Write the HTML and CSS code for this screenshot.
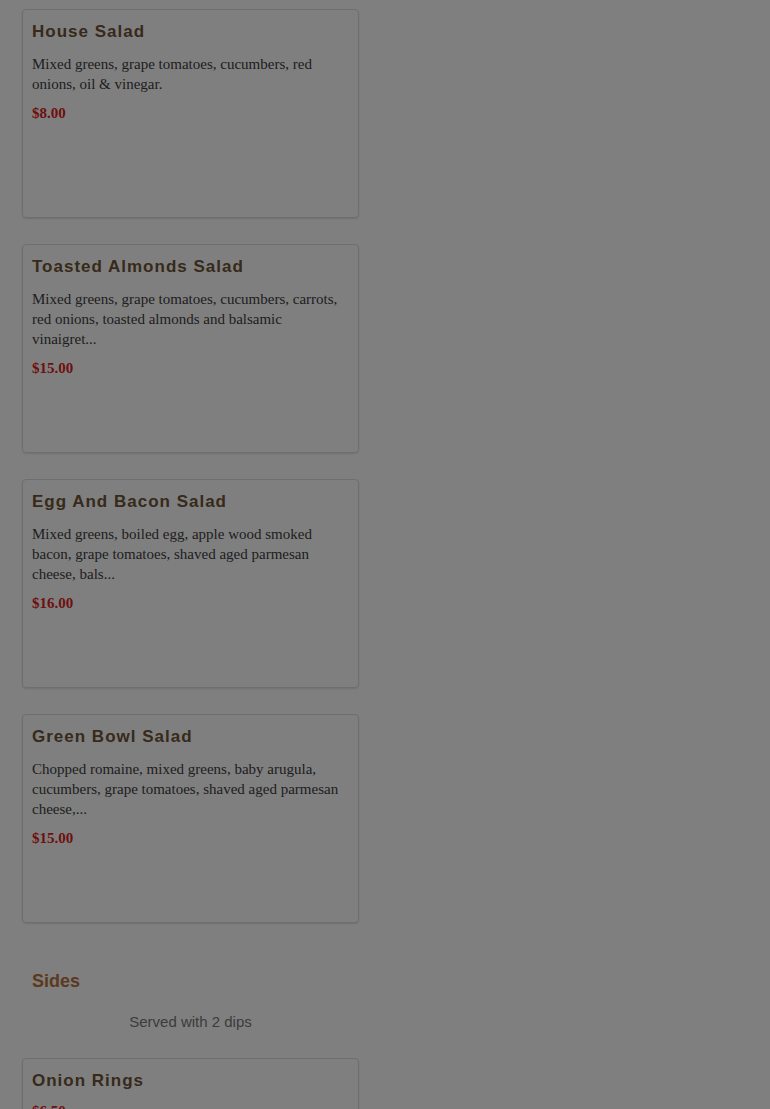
FILE: index.html
```html
<!DOCTYPE html>
<html lang="en">
<head>
  <meta charset="UTF-8">
  <meta name="viewport" content="width=device-width, initial-scale=1.0">
  <title>Menu</title>
  <link rel="stylesheet" href="styles.css">
</head>
<body>
  <div id="menu">
    <div class="item">
      <h3 class="itemName">House Salad</h3>
      <p class="itemDesc">Mixed greens, grape tomatoes, cucumbers, red onions, oil &amp; vinegar.</p>
      <p class="itemPrice">$8.00</p>
    </div>
    <div class="item">
      <h3 class="itemName">Toasted Almonds Salad</h3>
      <p class="itemDesc">Mixed greens, grape tomatoes, cucumbers, carrots, red onions, toasted almonds and balsamic vinaigret...</p>
      <p class="itemPrice">$15.00</p>
    </div>
    <div class="item">
      <h3 class="itemName">Egg And Bacon Salad</h3>
      <p class="itemDesc">Mixed greens, boiled egg, apple wood smoked bacon, grape tomatoes, shaved aged parmesan cheese, bals...</p>
      <p class="itemPrice">$16.00</p>
    </div>
    <div class="item">
      <h3 class="itemName">Green Bowl Salad</h3>
      <p class="itemDesc">Chopped romaine, mixed greens, baby arugula, cucumbers, grape tomatoes, shaved aged parmesan cheese,...</p>
      <p class="itemPrice">$15.00</p>
    </div>

    <h2 class="category">Sides</h2>
    <p class="categoryNote">Served with 2 dips</p>

    <div class="item">
      <h3 class="itemName">Onion Rings</h3>
      <p class="itemPrice">$6.50</p>
    </div>
  </div>
  <div id="backdrop"></div>
</body>
</html>
```

FILE: styles.css
```css
/* General Styling */
body {
  margin: 0;
  background-color: #fff;
  font-family: "Liberation Serif", "Times New Roman", serif;
  color: #404040;
}

#menu {
  width: 337px;
  margin-left: 22px;
  padding-top: 9px;
}

/* Menu items */
.item {
  box-sizing: border-box;
  height: 209px;
  margin-bottom: 26px;
  padding: 11px 9px 10px;
  border: 1px solid #dcdcdc;
  border-radius: 4px;
  box-shadow: 0 1px 2px rgba(0, 0, 0, 0.12);
}

.itemName {
  margin: 0;
  font-family: "Liberation Sans", Arial, sans-serif;
  font-size: 17px;
  line-height: 22px;
  letter-spacing: 1px;
  color: #6e5436;
}

.itemDesc {
  margin: 11px 0 0;
  font-size: 15px;
  line-height: 20px;
}

.itemPrice {
  margin: 9px 0 0;
  font-size: 15px;
  font-weight: bold;
  line-height: 20px;
  color: #dc1e20;
}

/* Categories */
.category {
  margin: 47px 0 0 10px;
  font-family: "Liberation Sans", Arial, sans-serif;
  font-size: 18px;
  line-height: 22px;
  color: #b8723f;
}

.categoryNote {
  margin: 21px 0 27px;
  text-align: center;
  font-family: "Liberation Sans", Arial, sans-serif;
  font-size: 15px;
  line-height: 18px;
  color: #787878;
}

/* Modal backdrop */
#backdrop {
  position: fixed;
  top: 0;
  left: 0;
  right: 0;
  bottom: 0;
  background-color: rgba(0, 0, 0, 0.5);
}
```
